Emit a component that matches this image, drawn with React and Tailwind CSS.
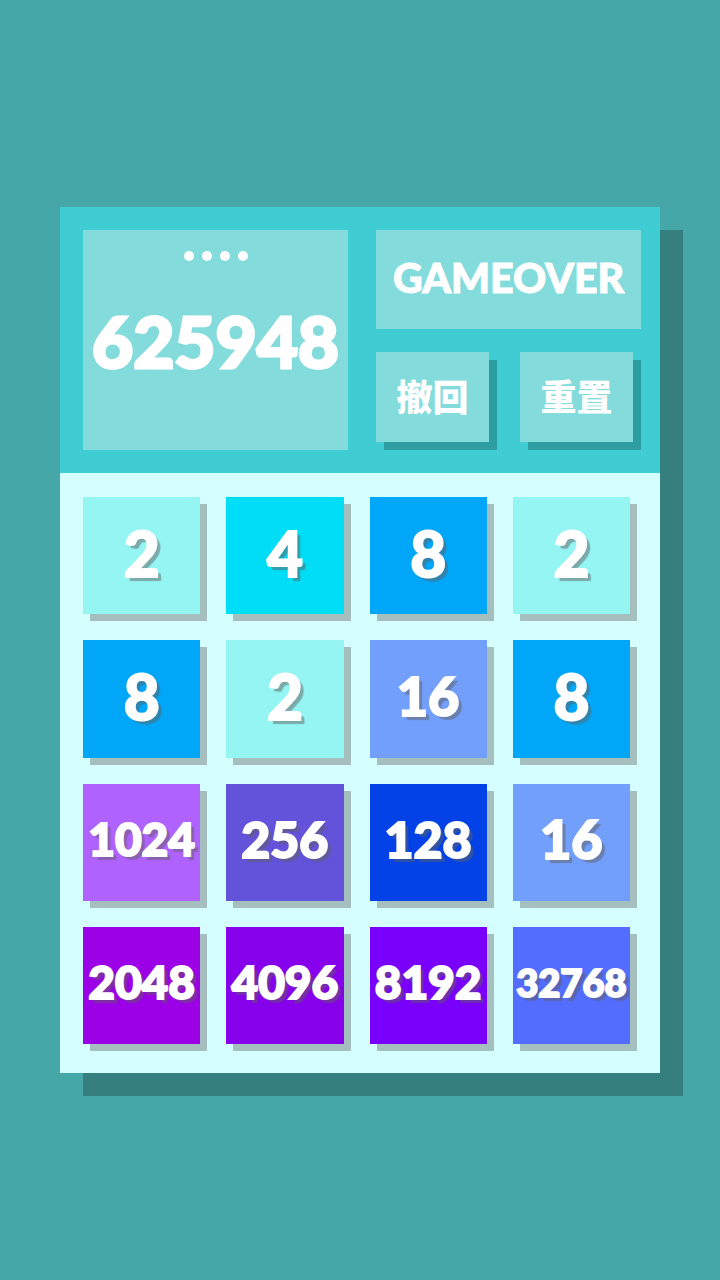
const tileStyles = {
  2: "bg-[#95f5f3] text-[62px]",
  4: "bg-[#00ddf7] text-[62px]",
  8: "bg-[#00a6f7] text-[62px]",
  16: "bg-[#739ffc] text-[54px]",
  128: "bg-[#0342e7] text-[50px]",
  256: "bg-[#6253da] text-[50px]",
  1024: "bg-[#b062ff] text-[46px]",
  2048: "bg-[#9b00e6] text-[46px]",
  4096: "bg-[#8700ec] text-[46px]",
  8192: "bg-[#7900fb] text-[46px]",
  32768: "bg-[#526dff] text-[38px]",
};

const board = [
  [2, 4, 8, 2],
  [8, 2, 16, 8],
  [1024, 256, 128, 16],
  [2048, 4096, 8192, 32768],
];

function Tile({ value }) {
  return (
    <div
      className={`flex aspect-square items-center justify-center pb-1.5 leading-none font-black shadow-[7px_7px_0_#a5bfbe] [-webkit-text-stroke:2px_white] [text-shadow:4px_4px_1px_rgba(95,95,95,0.5)] ${tileStyles[value]}`}
    >
      {value}
    </div>
  );
}

function ActionButton({ children }) {
  return (
    <button
      type="button"
      className="h-[90px] flex-1 bg-[#84dbdc] text-4xl font-black shadow-[8px_8px_0_#2e9da1]"
    >
      {children}
    </button>
  );
}

export default function App() {
  return (
    <main className="flex min-h-screen items-center justify-center bg-[#46a7a8] font-['Lato','Noto_Sans_CJK_SC',sans-serif] text-white">
      <div className="w-5/6 bg-[#d4fffe] shadow-[23px_23px_0_#35807f]">
        <header className="grid grid-cols-2 gap-7 bg-[#3fccd2] py-[23px] pr-[19px] pl-[23px]">
          <section className="flex h-[220px] flex-col items-center bg-[#84dbdc] pt-[21px]">
            <div className="flex gap-2" aria-hidden="true">
              <span className="size-2.5 rounded-full bg-white" />
              <span className="size-2.5 rounded-full bg-white" />
              <span className="size-2.5 rounded-full bg-white" />
              <span className="size-2.5 rounded-full bg-white" />
            </div>
            <output className="mt-11 text-[71px] leading-[72px] font-black [-webkit-text-stroke:3px_white]">
              625948
            </output>
          </section>
          <div className="flex flex-col gap-[23px]">
            <h1 className="flex h-[99px] items-center justify-center bg-[#84dbdc] pb-1 text-[41px] leading-none font-black [-webkit-text-stroke:1px_white]">
              GAMEOVER
            </h1>
            <div className="flex gap-[31px] pr-2">
              <ActionButton>撤回</ActionButton>
              <ActionButton>重置</ActionButton>
            </div>
          </div>
        </header>
        <div className="grid grid-cols-4 gap-[26px] pt-6 pr-[30px] pb-[29px] pl-[23px]">
          {board.flat().map((value, i) => (
            <Tile key={i} value={value} />
          ))}
        </div>
      </div>
    </main>
  );
}
